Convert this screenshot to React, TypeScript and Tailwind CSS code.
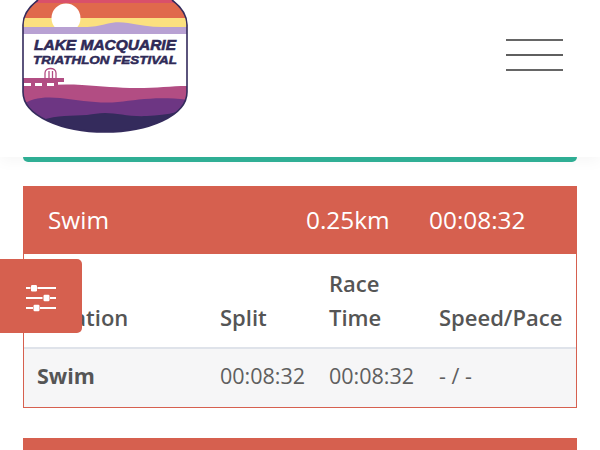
const badge = "M16 0 C8 6 1 14 1 25 V92 C1 116 40 132 83 132 C126 132 165 116 165 92 V25 C165 14 158 6 150 0 Z";

const Logo = () => (
  <svg width="166" height="133" viewBox="0 0 166 133" className="block">
    <defs>
      <clipPath id="badge">
        <path d={badge} />
      </clipPath>
    </defs>
    <g clipPath="url(#badge)">
      <rect x="0" y="0" width="166" height="133" fill="#ffffff" />
      <rect x="0" y="0" width="166" height="4" fill="#d9506a" />
      <rect x="0" y="3" width="166" height="16" fill="#e0694c" />
      <rect x="0" y="18" width="166" height="10" fill="#fbe07f" />
      <circle cx="44" cy="18" r="14.5" fill="#ffffff" />
      <path d="M0 27 H62 C72 27 76 26 84 24 C92 22 98 22 106 23 C118 25 128 27 140 27 H166 V34 H0 Z" fill="#b8a1d3" />
      <path d="M0 87 C20 85 40 84 60 85 C80 86 95 88 115 88 C135 88 150 86 166 86 V105 H0 Z" fill="#b24d83" />
      <path d="M0 105 C8 99 20 96 38 98 C58 100 76 104 96 102 C116 100 135 96 166 100 V125 H0 Z" fill="#6d3683" />
      <path d="M20 120 C35 115 50 116 65 115 C72 114 76 113 83 113 C95 113 108 117 125 116 C135 115 145 115 155 112 V140 H20 Z" fill="#342b5c" />
      <rect x="0" y="78" width="42" height="4" fill="#b24d83" />
      <rect x="0" y="82" width="36" height="5" fill="#b24d83" />
      <rect x="2" y="83" width="7" height="3" fill="#ffffff" />
      <rect x="13" y="83" width="7" height="3" fill="#ffffff" />
      <rect x="25" y="83" width="7" height="3" fill="#ffffff" />
      <path d="M23 78 V73 C23 67 34 67 34 73 V78 M27 78 V71 M30.5 78 V71" fill="none" stroke="#b24d83" strokeWidth="1.3" />
      <text x="12" y="50" fontFamily="'Liberation Sans', sans-serif" fontSize="15" fontWeight="700" fontStyle="italic" fill="#2f2a57" stroke="#2f2a57" strokeWidth="0.6" textLength="142" lengthAdjust="spacingAndGlyphs">LAKE MACQUARIE</text>
      <text x="11" y="64" fontFamily="'Liberation Sans', sans-serif" fontSize="11.2" fontWeight="700" fontStyle="italic" fill="#2f2a57" stroke="#2f2a57" strokeWidth="0.5" textLength="144" lengthAdjust="spacingAndGlyphs">TRIATHLON FESTIVAL</text>
    </g>
    <path d={badge.replace(" Z", "")} fill="none" stroke="#342b5c" strokeWidth="1.6" />
  </svg>
);

const FilterIcon = () => (
  <svg width="30" height="27" viewBox="0 0 30 27" fill="#ffffff">
    <rect x="0" y="2" width="4.5" height="2" />
    <rect x="11.5" y="2" width="18.5" height="2" />
    <rect x="5" y="0" width="6" height="6.5" rx="1.2" />
    <rect x="0" y="12" width="16.5" height="2" />
    <rect x="24" y="12" width="6" height="2" />
    <rect x="17.5" y="9.7" width="6" height="6.5" rx="1.2" />
    <rect x="0" y="22" width="7" height="2" />
    <rect x="14" y="22" width="16" height="2" />
    <rect x="7.5" y="19.7" width="6" height="6.5" rx="1.2" />
  </svg>
);

const App = () => {
  return (
    <div className="relative w-[600px] h-[450px] overflow-hidden bg-white font-['Open_Sans',sans-serif]">
      <header className="relative z-10 h-[157px] flex items-start justify-between pl-[22px] pr-[37px] bg-white shadow-[0_4px_14px_rgba(0,0,0,0.04)]">
        <Logo />
        <button className="mt-[39px] w-[57px] flex flex-col gap-[13px]">
          <span className="block h-[2px] bg-[#666666]" />
          <span className="block h-[2px] bg-[#5f5f5f]" />
          <span className="block h-[1.5px] bg-[#666666]" />
        </button>
      </header>

      <div className="relative z-10 h-[5px] mx-[23px] bg-[#2fae94] rounded-b-[5px]" />

      <section className="mt-[24px] mx-[23px] border border-[#d6604f]">
        <div className="-mx-px -mt-px h-[68px] flex items-center bg-[#d6604f] text-white text-[24.4px]">
          <span className="ml-[25px] w-[258px]">Swim</span>
          <span className="w-[123px]">0.25km</span>
          <span>00:08:32</span>
        </div>
        <div className="grid grid-cols-[196px_109px_110px_1fr] bg-white text-[#555555] text-[22px] font-semibold leading-[34px] border-b-2 border-[#dfe3ea]">
          <div className="h-[93px] pl-[13px] flex items-end pb-[13px]">Location</div>
          <div className="flex items-end pb-[13px]">Split</div>
          <div className="flex items-end pb-[13px]">Race<br />Time</div>
          <div className="flex items-end pb-[13px]">Speed/Pace</div>
        </div>
        <div className="h-[58px] pb-[3px] grid grid-cols-[196px_109px_110px_1fr] items-center bg-[#f6f6f7] text-[#5f5f5f] text-[21.5px]">
          <div className="pl-[13px] font-bold text-[#555555]">Swim</div>
          <div>00:08:32</div>
          <div>00:08:32</div>
          <div>- / -</div>
        </div>
      </section>

      <div className="mt-[30px] mx-[23px] h-[40px] bg-[#d6604f]" />

      <button className="absolute z-20 left-0 top-[259px] w-[82px] h-[74px] pt-[4px] flex items-center justify-center bg-[#d6604f] rounded-r-[5px]">
        <FilterIcon />
      </button>
    </div>
  );
};

export default App;
